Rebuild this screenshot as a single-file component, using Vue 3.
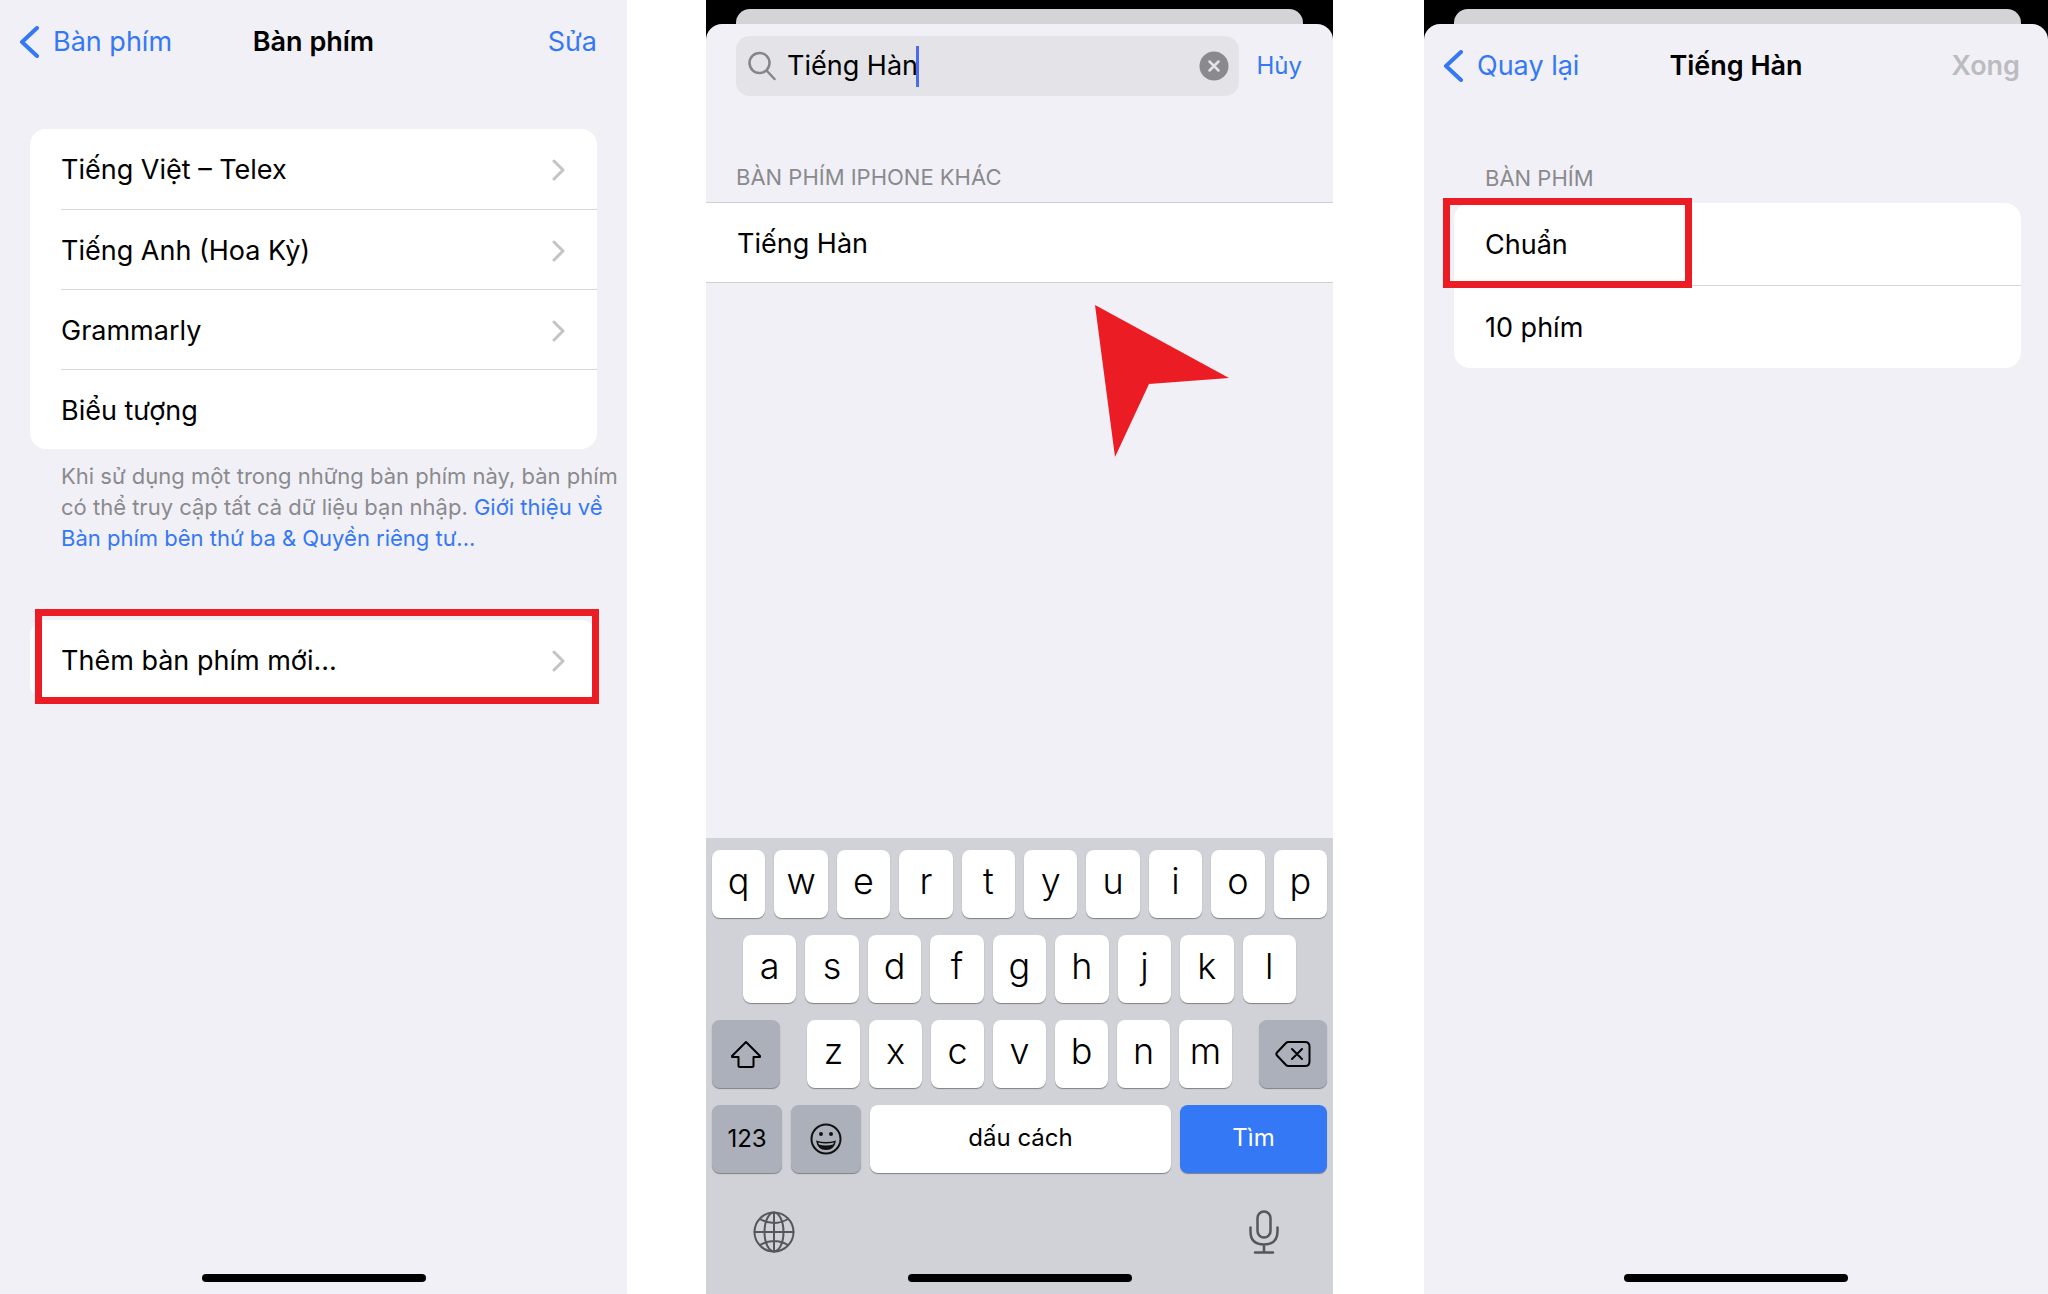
<template>
  <main class="screens">
    <!-- keyboard list -->
    <section class="panel">
      <header class="nav">
        <button class="link back">
          <svg class="back-icon" viewBox="0 0 20 32"><path d="M18 2 3 16l15 14" /></svg>
          Bàn phím
        </button>
        <h1>Bàn phím</h1>
        <button class="link end">Sửa</button>
      </header>

      <ul class="card first">
        <li v-for="k in keyboards" :key="k.name">
          <button class="row">
            {{ k.name }}
            <svg v-if="k.more" class="chevron" viewBox="0 0 14 22"><path d="m2 2 9 9-9 9" /></svg>
          </button>
        </li>
      </ul>
      <p class="note">
        Khi sử dụng một trong những bàn phím này, bàn phím<br />
        có thể truy cập tất cả dữ liệu bạn nhập. <a href="#">Giới thiệu về<br />
        Bàn phím bên thứ ba &amp; Quyền riêng tư...</a>
      </p>

      <div class="card add">
        <button class="row">
          Thêm bàn phím mới...
          <svg class="chevron" viewBox="0 0 14 22"><path d="m2 2 9 9-9 9" /></svg>
        </button>
        <span class="mark mark-add"></span>
      </div>
      <div class="home"></div>
    </section>

    <!-- search -->
    <section class="panel modal">
      <div class="backdrop"><div class="behind"></div></div>
      <div class="sheet">
        <div class="search-bar">
          <div class="field">
            <svg class="glass" viewBox="0 0 28 30">
              <circle cx="11.5" cy="12" r="10" />
              <path d="m19 20 7.500 8" />
            </svg>
            <input v-model="query" type="text" aria-label="Tìm kiếm" />
            <span class="caret"></span>
            <button class="clear" aria-label="Xóa" @click="query = ''">
              <svg viewBox="0 0 30 30">
                <circle cx="15" cy="15" r="14.500" />
                <path d="m10.500 10.500 9 9M19.500 10.500l-9 9" />
              </svg>
            </button>
          </div>
          <button class="link cancel">Hủy</button>
        </div>
        <h2 class="label">BÀN PHÍM IPHONE KHÁC</h2>
        <button class="row result">Tiếng Hàn</button>
        <svg class="pointer" viewBox="0 0 134 152"><path d="m0 0 134 73-80 6-34 73z" /></svg>

        <div class="keyboard">
          <div class="keys">
            <button v-for="c in 'qwertyuiop'" :key="c" class="key">{{ c }}</button>
          </div>
          <div class="keys middle">
            <button v-for="c in 'asdfghjkl'" :key="c" class="key">{{ c }}</button>
          </div>
          <div class="keys wide">
            <button class="key dark shift" aria-label="Shift">
              <svg viewBox="0 0 32 28"><path d="M16 2 2 16v1h6.500v8.500q0 1.500 1.500 1.500h12q1.500 0 1.500-1.500V17H30v-1z" /></svg>
            </button>
            <div class="keys letters">
              <button v-for="c in 'zxcvbnm'" :key="c" class="key">{{ c }}</button>
            </div>
            <button class="key dark shift" aria-label="Delete">
              <svg class="delete" viewBox="0 0 36 28">
                <path d="M13.500 2H30q4.500 0 4.500 4.500v15q0 4.500-4.500 4.500H13.500q-1.500 0-2.500-1L2 15.500q-1.300-1.500 0-3L11 3q1-1 2.500-1zM17 9l10 10M27 9 17 19" />
              </svg>
            </button>
          </div>
          <div class="keys">
            <button class="key dark small">123</button>
            <button class="key dark small" aria-label="Emoji">
              <svg class="emoji" viewBox="0 0 32 32">
                <circle class="face" cx="16" cy="16" r="14.500" />
                <circle cx="11" cy="11" r="2" />
                <circle cx="21" cy="11" r="2" />
                <path d="M6 17.500q10 3 20 0-1.500 9.500-10 9.500T6 17.500z" />
                <path class="teeth" d="M8 19.500q8 2 16 0l-1 2q-7 2-14 0z" />
              </svg>
            </button>
            <button class="key space">dấu cách</button>
            <button class="key find">Tìm</button>
          </div>
          <div class="tools">
            <button aria-label="Ngôn ngữ">
              <svg class="globe" viewBox="0 0 42 42">
                <circle cx="21" cy="21" r="19.500" />
                <ellipse cx="21" cy="21" rx="9.500" ry="19.500" />
                <path d="M21 1.500v39M1.500 21h39M7 8q14 8 28 0M7 34q14-8 28 0" />
              </svg>
            </button>
            <button aria-label="Đọc chính tả">
              <svg class="mic" viewBox="0 0 30 44">
                <rect x="8.500" y="1.500" width="13" height="26" rx="6.500" />
                <path d="M1.500 17.500v4q0 13 13.500 13t13.500-13v-4M15 34.500v8M6 42.500h18" />
              </svg>
            </button>
          </div>
          <div class="home"></div>
        </div>
      </div>
    </section>

    <!-- layout choice -->
    <section class="panel modal">
      <div class="backdrop"><div class="behind"></div></div>
      <div class="sheet">
        <header class="nav">
          <button class="link back">
            <svg class="back-icon" viewBox="0 0 20 32"><path d="M18 2 3 16l15 14" /></svg>
            Quay lại
          </button>
          <h1>Tiếng Hàn</h1>
          <button class="link end" disabled>Xong</button>
        </header>
        <h2 class="label inset">BÀN PHÍM</h2>
        <div class="card layouts">
          <ul>
            <li v-for="l in layouts" :key="l">
              <button class="row">{{ l }}</button>
            </li>
          </ul>
          <span class="mark mark-layout"></span>
        </div>
        <div class="home"></div>
      </div>
    </section>
  </main>
</template>

<script setup>
import { ref } from 'vue';

const query = ref('Tiếng Hàn');

const keyboards = [
  { name: 'Tiếng Việt – Telex', more: true },
  { name: 'Tiếng Anh (Hoa Kỳ)', more: true },
  { name: 'Grammarly', more: true },
  { name: 'Biểu tượng', more: false },
];
const layouts = ['Chuẩn', '10 phím'];
</script>

<style>
body {
  margin: 0;
  background: #fff;
}
</style>

<style scoped>
.screens {
  display: grid;
  grid-template-columns: 627fr 79fr 627fr 91fr 624fr;
  min-height: 100vh;
  font-family: Inter, "Liberation Sans", sans-serif;
  font-size: 27px;
  line-height: 36px;
  color: #000;
}
.panel {
  display: flex;
  flex-direction: column;
  min-width: 0;
  background: #f1f0f6;
}
.panel:nth-of-type(2) {
  grid-column: 3;
}
.panel:nth-of-type(3) {
  grid-column: 5;
}
button {
  margin: 0;
  padding: 0;
  border: none;
  background: none;
  color: inherit;
  font: inherit;
  cursor: pointer;
}
svg {
  display: block;
  fill: none;
  stroke: currentColor;
  stroke-width: 2;
  stroke-linecap: round;
  stroke-linejoin: round;
}
ul {
  list-style: none;
  margin: 0;
  padding: 0;
}
h1,
h2 {
  margin: 0;
  font-size: 27px;
  font-weight: 600;
}
a {
  color: #3478f6;
  text-decoration: none;
}

.nav {
  display: grid;
  grid-template-columns: 1fr auto 1fr;
  align-items: center;
  height: 84px;
}
.link {
  color: #3478f6;
}
.back {
  display: flex;
  align-items: center;
  gap: 14px;
  padding-left: 19px;
}
.back-icon {
  width: 20px;
  height: 32px;
  stroke-width: 4;
}
.end {
  justify-self: end;
  padding-right: 30px;
}
.end:disabled {
  padding-right: 28px;
  color: #bcbbc0;
  font-weight: 600;
}

.card {
  position: relative;
  margin: 0 30px;
  border-radius: 16px;
  background: #fff;
}
.card.first {
  margin-top: 45px;
}
.row {
  display: flex;
  align-items: center;
  justify-content: space-between;
  width: 100%;
  height: 80px;
  padding: 2px 31px 0;
  text-align: left;
}
.card li + li {
  margin-left: 31px;
  border-top: 1px solid #d8d8da;
}
.card li + li .row {
  padding-left: 0;
}
.first li + li .row {
  height: 79px;
}
.chevron {
  width: 14px;
  height: 22px;
  color: #c4c4c6;
  stroke-width: 3;
}
.note {
  margin: 12px 0 0 61px;
  font-size: 22px;
  line-height: 31px;
  color: #8a8a8e;
  white-space: nowrap;
}
.card.add {
  margin-top: 66px;
}
.mark {
  position: absolute;
  box-sizing: border-box;
  border: 7px solid #ec1c24;
  pointer-events: none;
}
.mark-add {
  inset: -11px -2px -4px 5px;
}
.home {
  width: 224px;
  height: 8px;
  margin: auto auto 12px;
  border-radius: 4px;
  background: #000;
}

.modal {
  background: #000;
}
.backdrop {
  padding: 9px 30px 0;
}
.panel:nth-of-type(3) .backdrop {
  padding-right: 27px;
}
.behind {
  height: 15px;
  border-radius: 14px 14px 0 0;
  background: #d4d3d8;
}
.sheet {
  position: relative;
  flex: 1;
  display: flex;
  flex-direction: column;
  border-radius: 16px 16px 0 0;
  background: #f1f0f6;
}
.search-bar {
  display: flex;
  align-items: center;
  gap: 17px;
  padding: 12px 31px 0 30px;
}
.field {
  flex: 1;
  display: flex;
  align-items: center;
  height: 60px;
  padding: 0 10px 0 12px;
  border-radius: 14px;
  background: #e4e3e8;
}
.glass {
  width: 28px;
  height: 30px;
  margin-right: 11px;
  color: #85858a;
  stroke-width: 2.5;
}
input {
  field-sizing: content;
  max-width: 360px;
  padding: 0;
  border: none;
  outline: none;
  background: none;
  font: inherit;
}
.caret {
  width: 3px;
  height: 41px;
  margin-left: -2px;
  background: #4b6bea;
}
.clear {
  margin-left: auto;
}
.clear svg {
  width: 30px;
  height: 30px;
  stroke: #e4e3e8;
  stroke-width: 2.5;
}
.clear circle {
  fill: #8a8a8e;
  stroke: none;
}
.cancel {
  font-size: 24px;
}
.label {
  margin: 65px 30px 0;
  font-size: 22px;
  font-weight: 400;
  line-height: 32px;
  color: #8a8a8e;
}
.result {
  height: 81px;
  margin-top: 9px;
  border-top: 1px solid #d0d0d4;
  border-bottom: 1px solid #d0d0d4;
  background: #fff;
}
.pointer {
  position: absolute;
  top: 281px;
  left: 62%;
  width: 134px;
  height: 152px;
  fill: #ec1c24;
  stroke: none;
}

.keyboard {
  display: flex;
  flex-direction: column;
  gap: 17px;
  margin-top: auto;
  padding: 12px 6px 0;
  background: #d1d2d8;
}
.keys {
  display: flex;
  gap: 9px;
}
.middle {
  padding: 0 31px;
}
.wide {
  gap: 27px;
}
.letters {
  flex: 1;
}
.key {
  flex: 1;
  display: flex;
  align-items: center;
  justify-content: center;
  min-width: 0;
  height: 68px;
  padding-bottom: 6px;
  border-radius: 8px;
  background: #fff;
  box-shadow: 0 1px 1px #7f8085;
  font-size: 36px;
  font-weight: 350;
}
.dark {
  background: #abb0bb;
}
.shift {
  flex: 0 0 68px;
  padding: 0;
}
.shift svg {
  width: 32px;
  height: 28px;
}
.shift .delete {
  width: 36px;
}
.small,
.space,
.find {
  padding: 0;
  font-size: 24px;
  font-weight: 400;
}
.space,
.find {
  padding-bottom: 3px;
}
.small {
  flex: 0 0 70px;
}
.find {
  flex: 0 0 147px;
  background: #3478f6;
  color: #fff;
}
.emoji {
  width: 32px;
  height: 32px;
  fill: #111;
  stroke: none;
}
.emoji .face {
  fill: none;
  stroke: #111;
}
.emoji .teeth {
  fill: #abb0bb;
}
.tools {
  display: flex;
  align-items: center;
  justify-content: space-between;
  height: 44px;
  margin-top: 20px;
  padding: 0 48px 0 41px;
  color: #55575c;
}
.globe {
  width: 42px;
  height: 42px;
}
.mic {
  width: 30px;
  height: 44px;
  stroke-width: 2.5;
}
.keyboard .home {
  margin-top: 3px;
}

.label.inset {
  margin: 54px 61px 0;
}
.card.layouts {
  margin: 9px 27px 0 30px;
}
.layouts .row {
  height: 82px;
}
.mark-layout {
  top: -5px;
  left: -11px;
  width: 249px;
  height: 90px;
}
</style>
